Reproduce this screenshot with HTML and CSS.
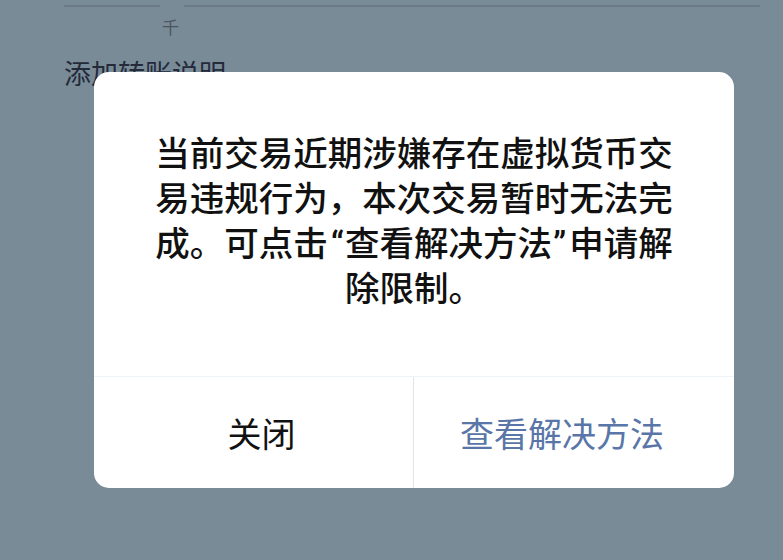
FILE: index.html
```html
<!DOCTYPE html>
<html lang="zh-CN">
<head>
<meta charset="utf-8">
<title>交易提示</title>
<link rel="stylesheet" href="styles.css">
</head>
<body>
<div class="page">
  <div class="amount-line">
    <span class="line-seg seg-a"></span>
    <span class="line-gap"></span>
    <span class="line-seg seg-b"></span>
  </div>
  <div class="unit">千</div>
  <div class="note">添加转账说明</div>
</div>
<div class="dialog">
  <div class="dialog-body">当前交易近期涉嫌存在虚拟货币交<br>易违规行为，本次交易暂时无法完<br>成。可点击<span class="q q-open">“</span>查看解决方法<span class="q q-close">”</span>申请解<br>除限制。</div>
  <div class="dialog-actions">
    <div class="btn btn-close">关闭</div>
    <div class="btn btn-solve">查看解决方法</div>
  </div>
</div>
</body>
</html>
```
FILE: styles.css
```css
html, body {
  margin: 0;
  padding: 0;
}
body {
  width: 783px;
  height: 560px;
  background: #7a8b98;
  font-family: "Roboto", "Noto Sans CJK SC", sans-serif;
  overflow: hidden;
  position: relative;
}
.page {
  padding: 5px 23px 0 64px;
}
.amount-line {
  display: flex;
  height: 2px;
}
.line-seg {
  background: #6b7a85;
  height: 1.5px;
}
.seg-a { width: 96px; }
.line-gap { width: 24px; }
.seg-b { flex: 1; }
.unit {
  margin: 11px 0 0 98px;
  font-size: 17px;
  line-height: 20px;
  color: #4a5560;
}
.note {
  margin-top: 21px;
  font-size: 27px;
  line-height: 32px;
  color: #232a3a;
}
.dialog {
  position: absolute;
  left: 94px;
  top: 72px;
  width: 640px;
  height: 416px;
  background: #ffffff;
  border-radius: 15px;
  display: flex;
  flex-direction: column;
  overflow: hidden;
}
.dialog-body {
  padding: 60px 20px 0;
  box-sizing: border-box;
  height: 305px;
  text-align: center;
  font-size: 34.5px;
  line-height: 45px;
  color: #111111;
  font-weight: 500;
  border-bottom: 1px solid #eef3f8;
}
.q-open { margin-left: 3px; margin-right: 1px; }
.q-close { margin-left: 1px; margin-right: 3px; }
.dialog-actions {
  flex: 1;
  display: flex;
}
.btn {
  width: 50%;
  box-sizing: border-box;
  display: flex;
  align-items: center;
  justify-content: center;
  font-size: 34px;
}
.btn-close {
  color: #111111;
  padding-left: 16px;
  border-right: 1px solid #dfe5ec;
}
.btn-solve {
  color: #5a76a8;
  padding-right: 24px;
}
```
